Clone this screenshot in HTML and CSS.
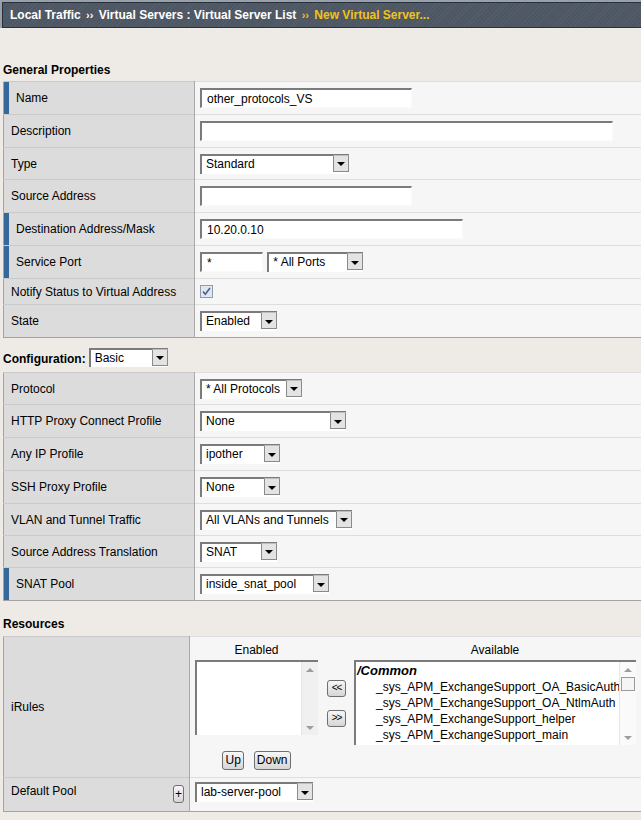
FILE: index.html
```html
<!DOCTYPE html>
<html>
<head>
	<meta charset="UTF-8">
	<title>New Virtual Server</title>
	<link rel="stylesheet" href="styles.css">
</head>

<body>

<div class="topbar">
	<div class="crumbs">
		Local Traffic <span class="sep">&rsaquo;&rsaquo;</span> Virtual Servers : Virtual Server List
		<span class="sep cur">&rsaquo;&rsaquo;</span> <span class="cur">New Virtual Server...</span>
	</div>
</div>

<div class="page">
	<h3 class="title">General Properties</h3>
	<div class="wrap">
	<table class="props">
		<tr>
			<td class="lbl req">Name</td>
			<td class="val"><input class="txt w212" type="text" value="other_protocols_VS" /></td>
		</tr>
		<tr>
			<td class="lbl">Description</td>
			<td class="val"><input class="txt w413" type="text" /></td>
		</tr>
		<tr class="r32">
			<td class="lbl">Type</td>
			<td class="val"><span class="sel w149"><span class="opt">Standard</span><span class="arr"></span></span></td>
		</tr>
		<tr>
			<td class="lbl">Source Address</td>
			<td class="val"><input class="txt w212" type="text" /></td>
		</tr>
		<tr>
			<td class="lbl req">Destination Address/Mask</td>
			<td class="val"><input class="txt w263" type="text" value="10.20.0.10" /></td>
		</tr>
		<tr>
			<td class="lbl req">Service Port</td>
			<td class="val">
				<input class="txt w63" type="text" value="*" />
				<span class="sel w96"><span class="opt">* All Ports</span><span class="arr"></span></span>
			</td>
		</tr>
		<tr class="short">
			<td class="lbl">Notify Status to Virtual Address</td>
			<td class="val">
				<svg class="chk" width="13" height="13" viewBox="0 0 13 13">
					<rect x="0.5" y="0.5" width="12" height="12" fill="#e6ebf2" stroke="#8c9bb0" />
					<rect x="1.5" y="1.5" width="10" height="10" fill="#dfe6ee" />
					<path d="M3 6.5 L5.3 9.2 L10 3" fill="none" stroke="#4a5f8c" stroke-width="1.6" />
				</svg>
			</td>
		</tr>
		<tr>
			<td class="lbl">State</td>
			<td class="val"><span class="sel w77"><span class="opt">Enabled</span><span class="arr"></span></span></td>
		</tr>
	</table>
	</div>

	<div class="config">
		<b>Configuration:</b>
		<span class="sel w79 low"><span class="opt">Basic</span><span class="arr"></span></span>
	</div>

	<div class="wrap">
	<table class="props">
		<tr class="r32">
			<td class="lbl">Protocol</td>
			<td class="val"><span class="sel w102"><span class="opt">* All Protocols</span><span class="arr"></span></span></td>
		</tr>
		<tr>
			<td class="lbl">HTTP Proxy Connect Profile</td>
			<td class="val"><span class="sel w146"><span class="opt">None</span><span class="arr"></span></span></td>
		</tr>
		<tr>
			<td class="lbl">Any IP Profile</td>
			<td class="val"><span class="sel w80"><span class="opt">ipother</span><span class="arr"></span></span></td>
		</tr>
		<tr>
			<td class="lbl">SSH Proxy Profile</td>
			<td class="val"><span class="sel w80"><span class="opt">None</span><span class="arr"></span></span></td>
		</tr>
		<tr class="r32">
			<td class="lbl">VLAN and Tunnel Traffic</td>
			<td class="val"><span class="sel w152"><span class="opt">All VLANs and Tunnels</span><span class="arr"></span></span></td>
		</tr>
		<tr class="r32">
			<td class="lbl">Source Address Translation</td>
			<td class="val"><span class="sel w77"><span class="opt">SNAT</span><span class="arr"></span></span></td>
		</tr>
		<tr>
			<td class="lbl req">SNAT Pool</td>
			<td class="val"><span class="sel w129"><span class="opt">inside_snat_pool</span><span class="arr"></span></span></td>
		</tr>
	</table>
	</div>

	<h3 class="title res">Resources</h3>
	<div class="wrap">
	<table class="props narrow">
		<tr>
			<td class="lbl">iRules</td>
			<td class="val">
				<div class="rules">
					<div class="col">
						<div class="head">Enabled</div>
						<div class="lst enabled">
							<div class="items"></div>
							<div class="sb"><span class="up"></span><span class="down"></span></div>
						</div>
						<div class="updown"><span class="btn">Up</span><span class="btn">Down</span></div>
					</div>
					<div class="move">
						<span class="btn sm">&lt;&lt;</span>
						<span class="btn sm">&gt;&gt;</span>
					</div>
					<div class="col">
						<div class="head">Available</div>
						<div class="lst avail">
							<div class="items">
								<div class="grp">/Common</div>
								<div class="item">_sys_APM_ExchangeSupport_OA_BasicAuth</div>
								<div class="item">_sys_APM_ExchangeSupport_OA_NtlmAuth</div>
								<div class="item">_sys_APM_ExchangeSupport_helper</div>
								<div class="item">_sys_APM_ExchangeSupport_main</div>
							</div>
							<div class="sb"><span class="up"></span><span class="thumb"></span><span class="down"></span></div>
						</div>
					</div>
				</div>
			</td>
		</tr>
		<tr>
			<td class="lbl top">
				<div class="pool">Default Pool <span class="btn plus">+</span></div>
			</td>
			<td class="val top"><span class="sel w118"><span class="opt">lab-server-pool</span><span class="arr"></span></span></td>
		</tr>
	</table>
	</div>
</div>

</body>
</html>
```

FILE: styles.css
```css
*{ margin: 0; padding: 0; box-sizing: border-box;}
body{ background: #eeebe6; font: 12px "Liberation Sans", Arial, sans-serif; color: #000; overflow: hidden;}

/* breadcrumb bar */
.topbar{ background: #97a1ac; padding: 2px 0 0 2px;}
.crumbs{ height: 26px; line-height: 24px; padding-left: 7px; border: 1px solid #2a313b; border-right: none; color: #fff; font-weight: bold; white-space: nowrap;
	background: #4d5663 repeating-linear-gradient(135deg, rgba(255,255,255,.04) 0 1px, transparent 1px 3px);}
.crumbs .sep{ font-size: 11px; margin: 0 2px;}
.crumbs .cur{ color: #f2c318;}

.page{ padding-left: 3px;}
.title{ font-size: 12px; font-weight: bold; line-height: 14px; margin: 35px 0 4px;}
.title.res{ margin: 16px 0 5px;}

.wrap{ overflow: hidden;}
.props{ width: calc(100% + 4px); border-collapse: collapse; border: 1px solid #a3a3a3;}
.props td{ height: 33px; border-top: 1px solid #c9c9c9; vertical-align: middle;}
.props tr.r32 td{ height: 32px;}
.props tr.short td{ height: 26px;}
.props .lbl{ width: 191px; padding-left: 7px; background: #dcdcdc; border-right: 1px solid #a9a9a9; white-space: nowrap;}
.props .lbl.req{ padding-left: 12px; box-shadow: inset 5px 0 0 #37689a;}
.props .val{ padding-left: 5px; background: #f6f6f6; border-top-color: #dedede;}
.props.narrow .lbl{ width: 186px;}
.props td.top{ vertical-align: top; height: 34px;}

/* text boxes and drop downs */
.txt{ height: 20px; padding: 0 5px; vertical-align: middle; background: #fff; font: 12px "Liberation Sans", Arial, sans-serif; color: #000; outline: none;
	border-style: solid; border-width: 2px 1px 1px 2px; border-color: #7b7b7b #fafafa #fafafa #7b7b7b;}
.sel{ display: inline-flex; align-items: flex-start; height: 20px; vertical-align: middle; background: #fff; border-style: solid; border-width: 2px 0 0 2px; border-color: #7b7b7b;}
.sel .opt{ flex: 1; padding: 1px 0 0 4px; line-height: 15px; white-space: nowrap; overflow: hidden;}
.sel .arr{ display: flex; align-items: center; justify-content: center; width: 16px; height: 17px; margin-top: -1px; background: #e3e3e3; border: 1px solid #8a8a8a; border-top-color: #bdbdbd;}
.sel .arr:after{ content: ""; margin-top: 2px; border-left: 4px solid transparent; border-right: 4px solid transparent; border-top: 4px solid #000;}
.sel.low{ height: 19px;}

.w63{ width: 63px;} .w77{ width: 77px;} .w79{ width: 79px;} .w80{ width: 80px;} .w96{ width: 96px;}
.w102{ width: 102px;} .w118{ width: 118px;} .w129{ width: 129px;} .w146{ width: 146px;} .w149{ width: 149px;}
.w152{ width: 152px;} .w212{ width: 212px;} .w263{ width: 263px;} .w413{ width: 413px;}
.txt.w63{ margin-right: 1px;}

.chk{ display: block;}
.config{ margin: 9px 0 5px; height: 20px; display: flex; align-items: center; gap: 3px;}
.config b{ margin-top: 4px;}

/* iRules lists */
.rules{ display: flex; align-items: flex-start; padding: 6px 0 7px;}
.rules .col{ display: flex; flex-direction: column; align-items: center;}
.rules .head{ line-height: 14px; margin-bottom: 3px;}
.lst{ display: flex; background: #fff; border-style: solid; border-width: 2px 0 0 2px; border-color: #7b7b7b;}
.lst .items{ flex: 1; padding-top: 1px; line-height: 16px; white-space: nowrap; overflow: hidden;}
.lst.enabled{ width: 123px; height: 75px;}
.lst.avail{ width: 282px; height: 85px;}
.lst .grp{ padding-left: 1px; font-weight: bold; font-style: italic; font-size: 13px;}
.lst .item{ padding-left: 20px;}
.sb{ width: 17px; background: #f0f0f0; border-left: 1px solid #e6e6e6; display: flex; flex-direction: column; align-items: center; padding: 6px 0 5px;}
.sb .up{ border-left: 4px solid transparent; border-right: 4px solid transparent; border-bottom: 4px solid #9d9d9d;}
.sb .down{ margin-top: auto; border-left: 4px solid transparent; border-right: 4px solid transparent; border-top: 4px solid #9d9d9d;}
.sb .thumb{ width: 14px; height: 14px; margin-top: 5px; background: #f5f5f5; border: 1px solid #9a9a9a;}
.lst.avail .sb{ background: #fafafa;}

.move{ display: flex; flex-direction: column; gap: 13px; margin: 37px 8px 0 9px;}
.updown{ display: flex; gap: 10px; margin-top: 16px;}
.btn{ display: inline-block; height: 19px; line-height: 17px; padding: 0 2px; border: 1px solid #6f6f6f; border-radius: 3px; background: linear-gradient(#f7f7f7, #d6d6d6); font-size: 12px; text-align: center;}
.btn.sm{ width: 19px; height: 17px; line-height: 14px; padding: 0; font-size: 10px; letter-spacing: -1px;}

.pool{ display: flex; justify-content: space-between; align-items: flex-start; padding: 6px 5px 0 0; line-height: 14px;}
.btn.plus{ width: 11px; height: 18px; line-height: 16px; padding: 0; margin-top: 1px; font-size: 12px;}
.props td.val.top{ padding-top: 4px;}
```
